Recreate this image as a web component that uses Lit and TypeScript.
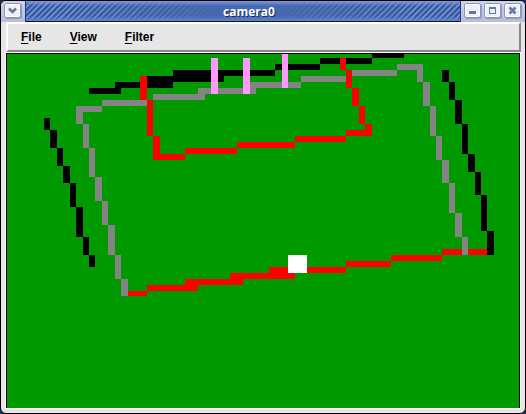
import { LitElement, css, html, svg } from "lit";
import { customElement, state } from "lit/decorators.js";

type Box = [x1: number, y1: number, x2: number, y2: number];
interface Layer { name: string; boxes: Box[]; }

// Classified camera regions, in window coordinates, painted in order.
const LAYERS: Layer[] = [
  { name: "wall", boxes: [
    [89, 88, 121, 94], [115, 82, 147, 88], [147, 76, 173, 88], [173, 70, 224, 82],
    [224, 70, 275, 76], [275, 64, 320, 70], [320, 58, 372, 64], [372, 54, 404, 58],
    [44, 118, 50, 130], [50, 130, 57, 148], [57, 148, 63, 166], [63, 166, 70, 183],
    [70, 183, 76, 207], [76, 207, 83, 237], [83, 237, 89, 255], [89, 255, 95, 267],
    [442, 70, 449, 82], [449, 82, 455, 100], [455, 100, 462, 124], [462, 124, 468, 154],
    [468, 154, 475, 172], [475, 172, 481, 195], [481, 195, 487, 231], [487, 231, 494, 255],
  ] },
  { name: "goal", boxes: [
    [140, 76, 147, 100], [147, 100, 153, 136], [153, 136, 160, 160], [160, 154, 185, 160],
    [185, 148, 237, 154], [237, 142, 295, 148], [295, 136, 346, 142], [346, 130, 372, 136],
    [365, 124, 372, 130], [340, 58, 346, 70], [346, 70, 352, 88], [352, 88, 359, 106],
    [359, 106, 365, 124], [128, 291, 147, 296], [147, 285, 198, 291], [185, 279, 243, 285],
    [230, 273, 295, 279], [269, 267, 346, 273], [346, 261, 391, 267], [391, 255, 442, 261],
    [442, 249, 487, 255],
  ] },
  { name: "line", boxes: [
    [76, 106, 102, 112], [76, 112, 83, 124], [83, 124, 89, 148], [89, 148, 95, 177],
    [95, 177, 102, 201], [102, 201, 108, 225], [108, 225, 115, 255], [115, 255, 121, 279],
    [121, 279, 128, 296], [102, 100, 147, 106], [153, 94, 205, 100], [198, 88, 256, 94],
    [250, 82, 301, 88], [301, 76, 346, 82], [352, 70, 397, 76], [397, 64, 423, 70],
    [417, 70, 423, 82], [423, 82, 430, 106], [430, 106, 436, 136], [436, 136, 442, 160],
    [442, 160, 449, 183], [449, 183, 455, 213], [455, 213, 462, 237], [462, 237, 468, 255],
  ] },
  { name: "post", boxes: [[211, 58, 218, 94], [243, 58, 250, 94], [282, 54, 288, 88]] },
  { name: "ball", boxes: [[288, 255, 307, 273]] },
];

@customElement("camera-view")
export class CameraView extends LitElement {
  static styles = css`
    :host { display: block; }
    .scene { display: block; width: 100%; height: auto; background: #009900; shape-rendering: crispEdges; }
    .wall { fill: #000; }
    .goal { fill: #f00; }
    .line { fill: #848484; }
    .post { fill: #ff99ff; }
    .ball { fill: #fff; }
  `;
  render() {
    return html`<svg class="scene" viewBox="7 54 512 354" role="img" aria-label="Camera image">
      ${LAYERS.map((l) => svg`<g class=${l.name}>${l.boxes.map(([a, b, c, d]) =>
        svg`<rect x=${a} y=${b} width=${c - a} height=${d - b}></rect>`)}</g>`)}
    </svg>`;
  }
}

@customElement("app-root")
export class AppRoot extends LitElement {
  @state() private menus = ["File", "View", "Filter"];

  static styles = css`
    :host { display: block; background: #1c2c58; }
    .window { box-sizing: border-box; border: 1px solid #000; border-radius: 6px; background: #e6e6e6; overflow: hidden; }
    .titlebar { display: flex; height: 21px; }
    .group { display: flex; gap: 2px; padding: 2px 3px 0; box-sizing: border-box; background: linear-gradient(#cdd4ea, #b4bedc); }
    .left { border-right: 1px solid #23386c; }
    .right { border-left: 1px solid #23386c; }
    .control { display: block; width: 18px; height: 16px; padding: 0; border: 0; background: none; }
    .glyph { display: block; width: 18px; height: 16px; }
    .title {
      flex: 1; margin: 0; padding-left: 12px; text-align: center; color: #fff;
      border-bottom: 1px solid #0c1430;
      font: bold 12px/22px "Open Sans", "Noto Sans", sans-serif; text-shadow: 1px 1px 0 #1b2d5c;
      background:
        linear-gradient(#7d9ad8, transparent 25%, transparent 75%, #6684c8),
        linear-gradient(90deg, transparent 10%, #4568b0 44%, #4568b0 58%, transparent 90%),
        repeating-linear-gradient(135deg, #7094d6 0 1px, #2f4f96 2px, #4668b0 4px);
    }
    .menubar {
      display: flex; gap: 4px; margin: 0 4px 0 5px; padding: 3px 1px;
      border: 2px solid; border-color: #fff #888 #888 #fff;
    }
    .menu {
      height: 20px; padding: 0 12px; border: 0; background: none; color: #000;
      font: bold 12px/20px "Liberation Sans", Arial, sans-serif;
    }
    .key { text-decoration: underline; text-underline-offset: 2px; text-decoration-thickness: 1px; }
    .frame { margin: 0 4px 4px 4px; border: 1px solid #fff; }
    .view { border: solid #000; border-width: 1px 1px 0; }
  `;

  private control(label: string, glyph: unknown) {
    return html`<button class="control" aria-label=${label}>
      <svg class="glyph" viewBox="0 0 18 16">
        <rect x="1" y="1" width="17" height="15" rx="2" fill="#8f9dc2"></rect>
        <rect x="0.5" y="0.5" width="16" height="14" rx="2" fill="#edf0fb" stroke="#8793b8"></rect>
        <rect x="1.5" y="1.5" width="14" height="12" rx="1" fill="none" stroke="#fff"></rect>
        ${glyph}
      </svg>
    </button>`;
  }

  render() {
    return html`
      <main class="window">
        <header class="titlebar">
          <div class="group left">
            ${this.control("Window menu", svg`<path d="M5 5.5 8.5 9 12 5.5" fill="none" stroke="#65769f" stroke-width="2.5"></path>`)}
          </div>
          <h1 class="title">camera0</h1>
          <div class="group right">
            ${this.control("Minimize", svg`<path d="M5 8h7v3H5z" fill="#65769f"></path>`)}
            ${this.control("Maximize", svg`<path d="M5 4h7v7H5zM6 6v4h5V6z" fill="#65769f" fill-rule="evenodd"></path>`)}
            ${this.control("Close", svg`<path d="M5.5 4.5l6 6m0-6l-6 6" fill="none" stroke="#65769f" stroke-width="2.5"></path>`)}
          </div>
        </header>
        <nav class="menubar">
          ${this.menus.map((m) => html`<button class="menu"><span class="key">${m[0]}</span>${m.slice(1)}</button>`)}
        </nav>
        <div class="frame"><div class="view"><camera-view></camera-view></div></div>
      </main>
    `;
  }
}
